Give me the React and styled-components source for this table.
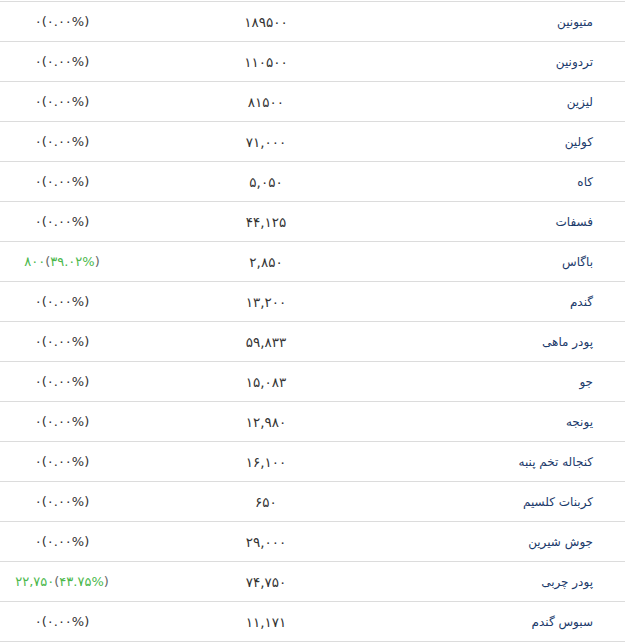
import React from 'react';
import styled, { createGlobalStyle } from 'styled-components';

const GlobalStyle = createGlobalStyle`
  html, body {
    margin: 0;
    padding: 0;
    background: #fff;
  }
  body {
    font-family: Tahoma, "DejaVu Sans", sans-serif;
    font-size: 12px;
  }
`;

const Table = styled.div`
  width: 625px;
  margin-top: 1px;
  border-top: 1px solid #dcdcdc;
`;

const Row = styled.div`
  display: grid;
  grid-template-columns: 124px 284px 1fr;
  height: 39px;
  align-items: center;
  border-bottom: 1px solid #dcdcdc;
`;

const Change = styled.div`
  text-align: center;
  direction: ltr;
  font-size: 13px;
  color: ${(p) => (p.$up ? '#4cb84c' : '#333')};
`;

const Paren = styled.span`
  color: ${(p) => (p.$up ? '#666' : 'inherit')};
`;

const Price = styled.div`
  text-align: center;
  direction: ltr;
  font-size: 13.5px;
  color: #333;
`;

const Name = styled.div`
  text-align: right;
  direction: rtl;
  padding-right: 32px;
  color: #1b3a6b;
`;

const rows = [
  ['متیونین', '۱۸۹۵۰۰', '۰', '۰.۰۰'],
  ['تردونین', '۱۱۰۵۰۰', '۰', '۰.۰۰'],
  ['لیزین', '۸۱۵۰۰', '۰', '۰.۰۰'],
  ['کولین', '۷۱,۰۰۰', '۰', '۰.۰۰'],
  ['کاه', '۵,۰۵۰', '۰', '۰.۰۰'],
  ['فسفات', '۴۴,۱۲۵', '۰', '۰.۰۰'],
  ['باگاس', '۲,۸۵۰', '۸۰۰', '۳۹.۰۲', true],
  ['گندم', '۱۳,۲۰۰', '۰', '۰.۰۰'],
  ['پودر ماهی', '۵۹,۸۳۳', '۰', '۰.۰۰'],
  ['جو', '۱۵,۰۸۳', '۰', '۰.۰۰'],
  ['یونجه', '۱۲,۹۸۰', '۰', '۰.۰۰'],
  ['کنجاله تخم پنبه', '۱۶,۱۰۰', '۰', '۰.۰۰'],
  ['کربنات کلسیم', '۶۵۰', '۰', '۰.۰۰'],
  ['جوش شیرین', '۲۹,۰۰۰', '۰', '۰.۰۰'],
  ['پودر چربی', '۷۴,۷۵۰', '۲۲,۷۵۰', '۴۳.۷۵', true],
  ['سبوس گندم', '۱۱,۱۷۱', '۰', '۰.۰۰'],
];

export default function App() {
  return (
    <>
      <GlobalStyle />
      <Table>
        {rows.map(([name, price, diff, pct, up]) => (
          <Row key={name}>
            <Change $up={up}>
              {diff}
              <Paren $up={up}>(</Paren>
              {pct}%
              <Paren $up={up}>)</Paren>
            </Change>
            <Price>{price}</Price>
            <Name>{name}</Name>
          </Row>
        ))}
      </Table>
    </>
  );
}
